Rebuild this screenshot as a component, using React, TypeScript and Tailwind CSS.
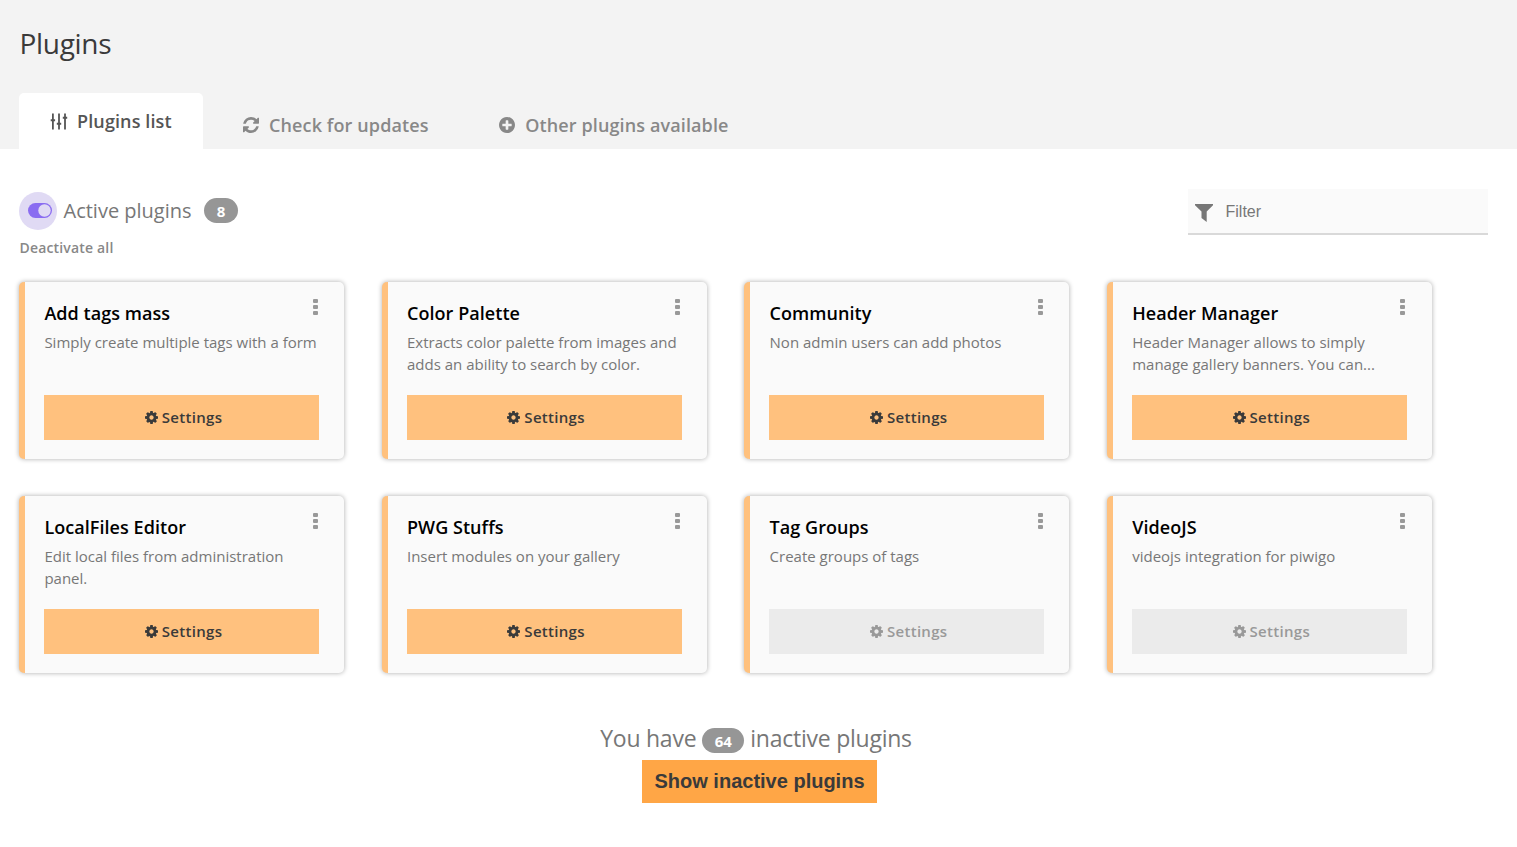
import React from "react";

type IconProps = { className?: string };

const SlidersIcon = ({ className }: IconProps) => (
  <svg viewBox="0 0 18 17" className={className} fill="currentColor">
    <path d="M2 0.500h1.800v5.700h1.300v2H3.800v8.300H2V8.200H0.700v-2H2zM8.100 0.500h1.800v9.200h1.300v2H9.900v4.800H8.100v-4.800H6.800v-2h1.300zM14.100 0.500h1.800v3.200h1.300v2h-1.300v10.800h-1.800V5.700h-1.300v-2h1.300z" />
  </svg>
);

const RefreshIcon = ({ className }: IconProps) => (
  <svg viewBox="0 128 1536 1536" className={className} fill="currentColor">
    <path d="M1511 1056q0 5-1 7-64 268-268 434.500t-478 166.500q-146 0-282.500-55t-243.500-157l-129 129q-19 19-45 19t-45-19-19-45v-448q0-26 19-45t45-19h448q26 0 45 19t19 45-19 45l-137 137q71 66 161 102t187 36q134 0 250-65t186-179q11-17 53-117 8-23 30-23h192q13 0 22.500 9.500t9.500 22.500zm25-800v448q0 26-19 45t-45 19h-448q-26 0-45-19t-19-45 19-45l138-138q-148-137-349-137-134 0-250 65t-186 179q-11 17-53 117-8 23-30 23h-199q-13 0-22.500-9.500t-9.500-22.500v-7q65-268 270-434.500t480-166.500q146 0 284 55.500t245 156.500l130-129q19-19 45-19t45 19 19 45z" />
  </svg>
);

const PlusCircleIcon = ({ className }: IconProps) => (
  <svg viewBox="128 128 1536 1536" className={className} fill="currentColor">
    <path d="M1344 960v-128q0-26-19-45t-45-19h-256v-256q0-26-19-45t-45-19h-128q-26 0-45 19t-19 45v256h-256q-26 0-45 19t-19 45v128q0 26 19 45t45 19h256v256q0 26 19 45t45 19h128q26 0 45-19t19-45v-256h256q26 0 45-19t19-45zm320-64q0 209-103 385.500t-279.500 279.500-385.500 103-385.500-103-279.500-279.500-103-385.500 103-385.500 279.500-279.500 385.500-103 385.500 103 279.500 279.500 103 385.500z" />
  </svg>
);

const CogIcon = ({ className }: IconProps) => (
  <svg viewBox="128 128 1536 1536" className={className} fill="currentColor">
    <path d="M1152 896q0-106-75-181t-181-75-181 75-75 181 75 181 181 75 181-75 75-181zm512-109v222q0 12-8 23t-20 13l-185 28q-19 54-39 91 35 50 107 138 10 12 10 25t-9 23q-27 37-99 108t-94 71q-12 0-26-9l-138-108q-44 23-91 38-16 136-29 186-7 28-36 28h-222q-14 0-24.500-8.500t-11.500-21.500l-28-184q-49-16-90-37l-141 107q-10 9-25 9-14 0-25-11-126-114-165-168-7-10-7-23 0-12 8-23 15-21 51-66.500t54-70.500q-27-50-41-99l-183-27q-13-2-21-12.500t-8-23.500v-222q0-12 8-23t19-13l186-28q14-46 39-92-40-57-107-138-10-12-10-24 0-10 9-23 26-36 98.500-107.500t94.500-71.500q13 0 26 10l138 107q44-23 91-38 16-136 29-186 7-28 36-28h222q14 0 24.500 8.500t11.500 21.500l28 184q49 16 90 37l142-107q9-9 24-9 13 0 25 10 129 119 165 170 7 8 7 22 0 12-8 23-15 21-51 66.500t-54 70.500q26 50 41 98l183 28q13 2 21 12.500t8 23.500z" />
  </svg>
);

const FilterIcon = ({ className }: IconProps) => (
  <svg viewBox="0 0 18 18" className={className} fill="currentColor">
    <path d="M0 0h18v1.300L11.700 7.500V18L6.500 14V7.500L0 1.300z" />
  </svg>
);

const ToggleIcon = ({ className }: IconProps) => (
  <svg viewBox="0 0 24 15" className={className}>
    <rect width="24" height="15" rx="7.500" fill="#8a6cf1" />
    <circle cx="16.500" cy="7.500" r="6.200" fill="#e0daf4" />
  </svg>
);

const DotsIcon = ({ className }: IconProps) => (
  <svg viewBox="0 0 5 16" className={className} fill="currentColor">
    <rect width="5" height="4" rx="1" />
    <rect y="6" width="5" height="4" rx="1" />
    <rect y="12" width="5" height="4" rx="1" />
  </svg>
);

type Plugin = { name: string; description: string; settings: boolean };

const plugins: Plugin[] = [
  { name: "Add tags mass", description: "Simply create multiple tags with a form", settings: true },
  { name: "Color Palette", description: "Extracts color palette from images and adds an ability to search by color.", settings: true },
  { name: "Community", description: "Non admin users can add photos", settings: true },
  { name: "Header Manager", description: "Header Manager allows to simply manage gallery banners. You can...", settings: true },
  { name: "LocalFiles Editor", description: "Edit local files from administration panel.", settings: true },
  { name: "PWG Stuffs", description: "Insert modules on your gallery", settings: true },
  { name: "Tag Groups", description: "Create groups of tags", settings: false },
  { name: "VideoJS", description: "videojs integration for piwigo", settings: false },
];

const PluginCard = ({ plugin }: { plugin: Plugin }) => (
  <article className="flex h-[177px] w-[325px] flex-col rounded-[5px] border-l-[6px] border-[#ffc17e] bg-[#fafafa] pl-[19px] pr-[25px] shadow-[0_0_5px_#acacac]">
    <div className="flex items-start justify-between">
      <h2 className="mt-[19px] ml-[0.400px] text-[18px] leading-6 font-semibold tracking-[0.050px] text-black">{plugin.name}</h2>
      <button aria-label="Options" className="mt-[17px] mr-[1.400px] text-[#999]">
        <DotsIcon className="h-4 w-[5px]" />
      </button>
    </div>
    <p className="mt-[6px] ml-[0.400px] h-[44px] text-[15px] leading-[22px] text-[#777]">{plugin.description}</p>
    <button
      className={
        plugin.settings
          ? "mt-5 flex h-[45px] w-full items-center justify-center gap-[4px] bg-[#ffc17e] pl-[4px] text-[15px] font-semibold tracking-[0.300px] text-[#3a3a3a]"
          : "mt-5 flex h-[45px] w-full items-center justify-center gap-[4px] bg-[#ebebeb] pl-[4px] text-[15px] font-semibold tracking-[0.300px] text-[#999]"
      }
    >
      <CogIcon className="size-[13px]" />
      Settings
    </button>
  </article>
);

export default function App() {
  return (
    <div className="h-[847px] w-full overflow-hidden bg-white font-['Open_Sans',sans-serif] text-[#777]">
      <header className="flex h-[149px] flex-col justify-between bg-[#f3f3f3] pl-[19px]">
        <h1 className="mt-[23px] ml-[0.500px] text-[28px] leading-10 tracking-[-0.300px] text-[#3a3a3a]">Plugins</h1>
        <nav className="flex text-[18px] font-semibold tracking-[0.120px] text-[#888]">
          <a className="flex h-14 w-[184px] items-center rounded-t-[5px] bg-white pl-[31px] text-[#555]">
            <SlidersIcon className="mr-[9px] h-[17px] w-[18px]" />
            Plugins list
          </a>
          <a className="ml-[39.500px] flex h-14 items-center pt-2">
            <RefreshIcon className="mr-[10.500px] size-4" />
            Check for updates
          </a>
          <a className="ml-[70px] flex h-14 items-center pt-2">
            <PlusCircleIcon className="mr-[10.500px] size-4" />
            Other plugins available
          </a>
        </nav>
      </header>

      <main>
        <div className="flex h-[133px] justify-between pr-[29px] pl-[19px]">
          <div>
            <div className="mt-[42px] flex h-[38px] items-center pt-[1px]">
              <span className="flex size-[38px] shrink-0 items-center justify-center rounded-full bg-[#e0daf4] pl-[3px]">
                <ToggleIcon className="h-[15px] w-6" />
              </span>
              <span className="ml-[6.500px] pt-[1px] text-[20px] leading-7">Active plugins</span>
              <span className="ml-[12.500px] flex h-[25px] w-[34px] items-center justify-center rounded-full bg-[#969696] pt-[1px] text-[15px] font-bold text-white">8</span>
            </div>
            <a className="mt-[9px] ml-[0.500px] block text-[14px] leading-5 font-semibold tracking-[0.170px] text-[#888]">Deactivate all</a>
          </div>
          <label className="mt-[40px] flex h-[46px] w-[300px] items-center border-b-2 border-[#d9d9d9] bg-[#fafafa] pl-[7px]">
            <FilterIcon className="mt-[3px] size-[18px] shrink-0 text-[#777]" />
            <input
              placeholder="Filter"
              className="mt-[2px] ml-[12.500px] min-w-0 flex-1 bg-transparent font-['Liberation_Sans',Arial,sans-serif] text-[16px] outline-none placeholder:text-[#777]"
            />
          </label>
        </div>

        <section className="grid grid-cols-[repeat(4,325px)] gap-x-[37.600px] gap-y-[37px] pl-[19px]">
          {plugins.map((plugin) => (
            <PluginCard key={plugin.name} plugin={plugin} />
          ))}
        </section>

        <footer className="flex flex-col items-center pt-[48px] pr-[5px]">
          <p className="flex h-[34px] items-center text-[23px] tracking-[-0.250px]">
            You have
            <span className="mx-[6px] mt-[5px] flex h-[25px] w-[42px] items-center justify-center rounded-full bg-[#969696] pt-[1px] text-[15px] font-bold tracking-normal text-white">64</span>
            inactive plugins
          </p>
          <button className="mt-[5px] ml-[7px] h-[43px] w-[235px] bg-[#ffa646] pb-[2px] font-['Liberation_Sans',Arial,sans-serif] text-[20px] font-bold text-[#3a3a3a]">
            Show inactive plugins
          </button>
        </footer>
      </main>
    </div>
  );
}
